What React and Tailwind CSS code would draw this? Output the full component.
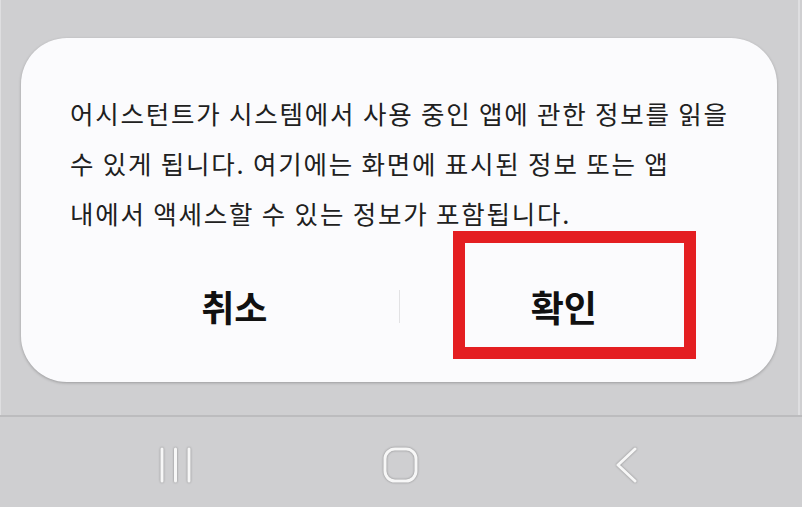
export default function App() {
  return (
    <div
      className="w-[802px] h-[507px] overflow-hidden bg-[#cfcfd1] flex flex-col"
      style={{ fontFamily: '"Noto Sans CJK KR", "Noto Sans", sans-serif' }}
    >
      {/** DIALOG AREA */}
      <div className="flex-1 flex flex-col pt-[38px] pl-[20px] pr-[21px] border-l border-r-2 border-[#dedee0] mr-[2px]">
        <div className="relative h-[344px] bg-[#fbfbfd] rounded-[46px] shadow-[0_1px_3px_rgba(0,0,0,0.25)] pt-[50px] px-[49px]">
          <p className="text-[25.5px] leading-[50px] text-[#202020] whitespace-nowrap tracking-[1.8px]">
            어시스턴트가 시스템에서 사용 중인 앱에 관한 정보를 읽을
            <br />
            수 있게 됩니다. 여기에는 화면에 표시된 정보 또는 앱
            <br />
            내에서 액세스할 수 있는 정보가 포함됩니다.
          </p>

          {/** BUTTONS */}
          <div className="mt-[33px] h-[70px] flex items-center">
            <div className="flex-1 flex items-center justify-center text-[36px] font-bold text-[#111]">
              취소
            </div>
            <div className="w-px h-[33px] bg-[#e2e2e4]" />
            <div className="flex-1 flex items-center justify-center text-[36px] font-bold text-[#111]">
              확인
            </div>
          </div>

          {/** HIGHLIGHT BOX */}
          <div className="absolute left-[432px] top-[193px] w-[243px] h-[128px] border-[12px] border-[#e41e21]" />
        </div>
      </div>

      {/** NAV BAR */}
      <div className="h-[92px] border-t-2 border-[#bcbcbe] bg-[#cfcfd1] flex items-center justify-center pt-[6px]">
        <div className="w-[802px] flex items-center">
          <div className="w-[159px]" />
          <svg width="34" height="36" viewBox="0 0 34 36" className="drop-shadow-[0_0_1px_rgba(0,0,0,0.35)]">
            <line x1="3" y1="2" x2="3" y2="34" stroke="#f7f7f7" strokeWidth="3" strokeLinecap="round" />
            <line x1="16.5" y1="2" x2="16.5" y2="34" stroke="#f7f7f7" strokeWidth="3" strokeLinecap="round" />
            <line x1="30" y1="2" x2="30" y2="34" stroke="#f7f7f7" strokeWidth="3" strokeLinecap="round" />
          </svg>
          <div className="w-[190px]" />
          <svg width="36" height="36" viewBox="0 0 36 36" className="drop-shadow-[0_0_1px_rgba(0,0,0,0.35)]">
            <rect x="2" y="2" width="31" height="32" rx="10" fill="none" stroke="#f7f7f7" strokeWidth="3" />
          </svg>
          <div className="w-[195px]" />
          <svg width="26" height="36" viewBox="0 0 26 36" className="drop-shadow-[0_0_1px_rgba(0,0,0,0.35)]">
            <polyline points="21,2 4,18 21,34" fill="none" stroke="#f7f7f7" strokeWidth="3" strokeLinecap="round" strokeLinejoin="round" />
          </svg>
        </div>
      </div>
    </div>
  );
}
